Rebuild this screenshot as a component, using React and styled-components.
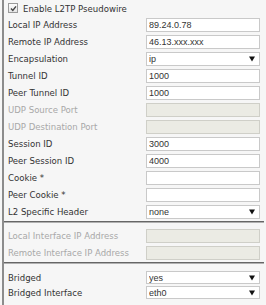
import React from "react";
import styled, { createGlobalStyle } from "styled-components";

const GlobalStyle = createGlobalStyle`
  html, body { margin: 0; padding: 0; }
  body {
    background: #f6f6f6;
    font-family: "DejaVu Sans Condensed", "Open Sans", sans-serif;
  }
`;

const Panel = styled.div`
  margin-left: 2px;
  width: 262px;
  min-height: 305px;
  border-left: 2px solid #8c8c8c;
  box-sizing: border-box;
`;

const CheckRow = styled.label`
  display: flex;
  align-items: center;
  gap: 5px;
  height: 16px;
  padding-left: 4px;
  font-size: 9.5px;
  color: #333;
`;

const CheckBox = styled.span`
  width: 8px;
  height: 8px;
  border: 1px solid #9a9a9a;
  background: linear-gradient(#fdfdfd, #e6e6e6);
  display: flex;
  align-items: center;
  justify-content: center;
`;

const Section = styled.div`
  padding-top: ${(p) => p.$top || 0}px;
  padding-bottom: 1px;
`;

const Divider = styled.div`
  height: 0;
  border-top: 1px solid #666;
  border-bottom: 1px solid #b0b0b0;
`;

const Row = styled.div`
  display: grid;
  grid-template-columns: 142px 114px;
  align-items: center;
  height: ${(p) => p.$h || 17}px;
`;

const Label = styled.span`
  padding-left: 4px;
  font-size: 9.5px;
  color: ${(p) => (p.$disabled ? "#a8a8a8" : "#333")};
  white-space: nowrap;
`;

const TextInput = styled.input`
  display: block;
  box-sizing: border-box;
  width: 114px;
  height: 14px;
  margin: 0;
  padding: 0 2px;
  border: 1px solid ${(p) => (p.disabled ? "#cfcfc8" : "#c9c9c9")};
  background: ${(p) => (p.disabled ? "#ebebe4" : "#fff")};
  font-family: "Liberation Sans", Arial, sans-serif;
  font-size: 9px;
  color: #333;
  outline: none;
`;

const SelectWrap = styled.div`
  position: relative;
  width: 114px;
  height: ${(p) => p.$h || 14}px;
`;

const Select = styled.select`
  display: block;
  appearance: none;
  box-sizing: border-box;
  width: 100%;
  height: 100%;
  min-height: 0;
  margin: 0;
  padding: 0 2px;
  line-height: normal;
  border: 1px solid #c9c9c9;
  border-radius: 0;
  background: #fff;
  font-family: "Liberation Sans", Arial, sans-serif;
  font-size: 9px;
  color: #333;
  outline: none;
`;

const Arrow = styled.span`
  position: absolute;
  right: 5px;
  top: 50%;
  transform: translateY(-50%);
  width: 0;
  height: 0;
  border-left: 3px solid transparent;
  border-right: 3px solid transparent;
  border-top: 5px solid #111;
  pointer-events: none;
`;

function Field({ label, value, disabled, select, h, boxH }) {
  return (
    <Row $h={h}>
      <Label $disabled={disabled}>{label}</Label>
      {select ? (
        <SelectWrap $h={boxH}>
          <Select defaultValue={value}>
            <option value={value}>{value}</option>
          </Select>
          <Arrow />
        </SelectWrap>
      ) : (
        <TextInput readOnly defaultValue={value || ""} disabled={disabled} />
      )}
    </Row>
  );
}

export default function App() {
  return (
    <>
      <GlobalStyle />
      <Panel>
        <CheckRow>
          <CheckBox>
            <svg width="7" height="7" viewBox="0 0 7 7">
              <path d="M1 3.6 L2.8 5.4 L6 1.4" fill="none" stroke="#444" strokeWidth="1.4" />
            </svg>
          </CheckBox>
          Enable L2TP Pseudowire
        </CheckRow>
        <Section>
          <Field label="Local IP Address" value="89.24.0.78" />
          <Field label="Remote IP Address" value="46.13.xxx.xxx" />
          <Field label="Encapsulation" value="ip" select />
          <Field label="Tunnel ID" value="1000" />
          <Field label="Peer Tunnel ID" value="1000" />
          <Field label="UDP Source Port" disabled />
          <Field label="UDP Destination Port" disabled />
          <Field label="Session ID" value="3000" />
          <Field label="Peer Session ID" value="4000" />
          <Field label="Cookie *" />
          <Field label="Peer Cookie *" />
          <Field label="L2 Specific Header" value="none" select />
        </Section>
        <Divider />
        <Section $top={4}>
          <Field label="Local Interface IP Address" disabled />
          <Field label="Remote Interface IP Address" disabled />
        </Section>
        <Divider />
        <Section $top={6}>
          <Field label="Bridged" value="yes" select h={15} boxH={13} />
          <Field label="Bridged Interface" value="eth0" select h={15} boxH={13} />
        </Section>
      </Panel>
    </>
  );
}
